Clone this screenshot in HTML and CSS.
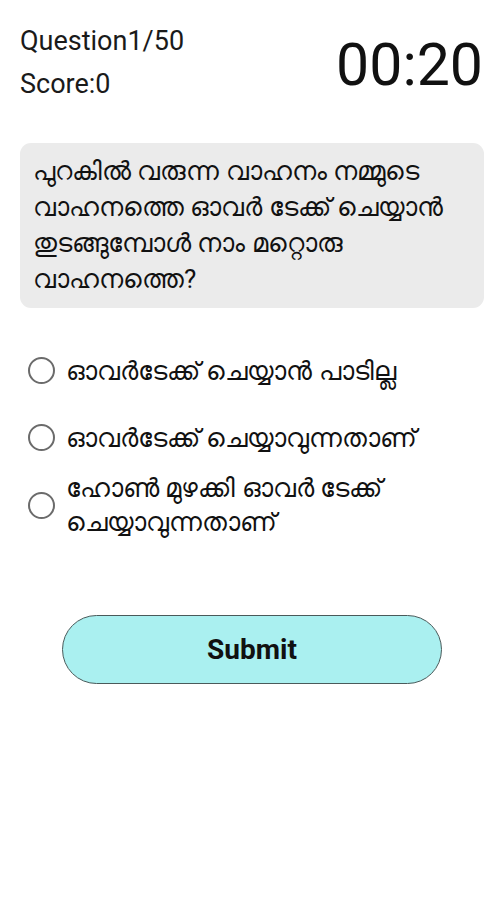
FILE: index.html
```html
<!DOCTYPE html>
<html lang="ml">
<head>
    <meta charset="UTF-8">
    <meta name="viewport" content="width=device-width, initial-scale=1.0">
    <title>Quiz</title>
    <link rel="stylesheet" href="styles.css">
</head>
<body>
    <!-- Top bar: progress and timer -->
    <header class="top-bar">
        <div class="progress">
            <p>Question1/50</p>
            <p>Score:0</p>
        </div>
        <div class="timer">00:20</div>
    </header>

    <!-- Question -->
    <div class="question-box">
        <p>പുറകിൽ വരുന്ന വാഹനം നമ്മുടെ വാഹനത്തെ ഓവർ ടേക്ക് ചെയ്യാൻ തുടങ്ങുമ്പോൾ നാം മറ്റൊരു വാഹനത്തെ?</p>
    </div>

    <!-- Answer options -->
    <div class="options">
        <label class="option">
            <span class="radio"></span>
            <span class="option-text">ഓവർടേക്ക് ചെയ്യാൻ പാടില്ല</span>
        </label>
        <label class="option">
            <span class="radio"></span>
            <span class="option-text">ഓവർടേക്ക് ചെയ്യാവുന്നതാണ്</span>
        </label>
        <label class="option">
            <span class="radio"></span>
            <span class="option-text">ഹോൺ മുഴക്കി ഓവർ ടേക്ക് ചെയ്യാവുന്നതാണ്</span>
        </label>
    </div>

    <div class="actions">
        <button class="submit-button">Submit</button>
    </div>
</body>
</html>
```

FILE: styles.css
```css
/* Basic Styling */
* {
    box-sizing: border-box;
    margin: 0;
    padding: 0;
}
body {
    font-family: Roboto, "Noto Sans", sans-serif;
    background-color: #ffffff;
    color: #111111;
    width: 503px;
    height: 900px;
    overflow: hidden;
}

/* Top bar */
.top-bar {
    display: flex;
    justify-content: space-between;
    align-items: flex-start;
    padding: 20px 20px 0 20px;
}

.progress p {
    font-size: 27px;
    line-height: 43px;
    color: #1a1a1a;
}

.timer {
    font-size: 59px;
    line-height: 60px;
    margin-top: 15px;
    color: #111111;
}

/* Question */
.question-box {
    margin: 37px 19px 0 20px;
    padding: 10px 14px 11px 13px;
    background-color: #ebebeb;
    border-radius: 11px;
    font-size: 26px;
    line-height: 36px;
    color: #111111;
}

/* Options */
.options {
    display: flex;
    flex-direction: column;
    margin-top: 29px;
    padding-left: 28px;
    padding-right: 40px;
}

.option {
    display: flex;
    align-items: center;
    gap: 11px;
    min-height: 67px;
    font-size: 26px;
    line-height: 34px;
}

.radio {
    flex: none;
    width: 27px;
    height: 27px;
    border: 2px solid #6b6b6b;
    border-radius: 50%;
}

/* Submit */
.actions {
    display: flex;
    justify-content: center;
    margin-top: 76px;
}

.submit-button {
    width: 380px;
    height: 69px;
    font-family: Roboto, sans-serif;
    font-size: 28px;
    font-weight: bold;
    color: #111111;
    background-color: #aaf0f0;
    border: 1.5px solid #4a5a5a;
    border-radius: 35px;
    margin-left: 1px;
}
```
